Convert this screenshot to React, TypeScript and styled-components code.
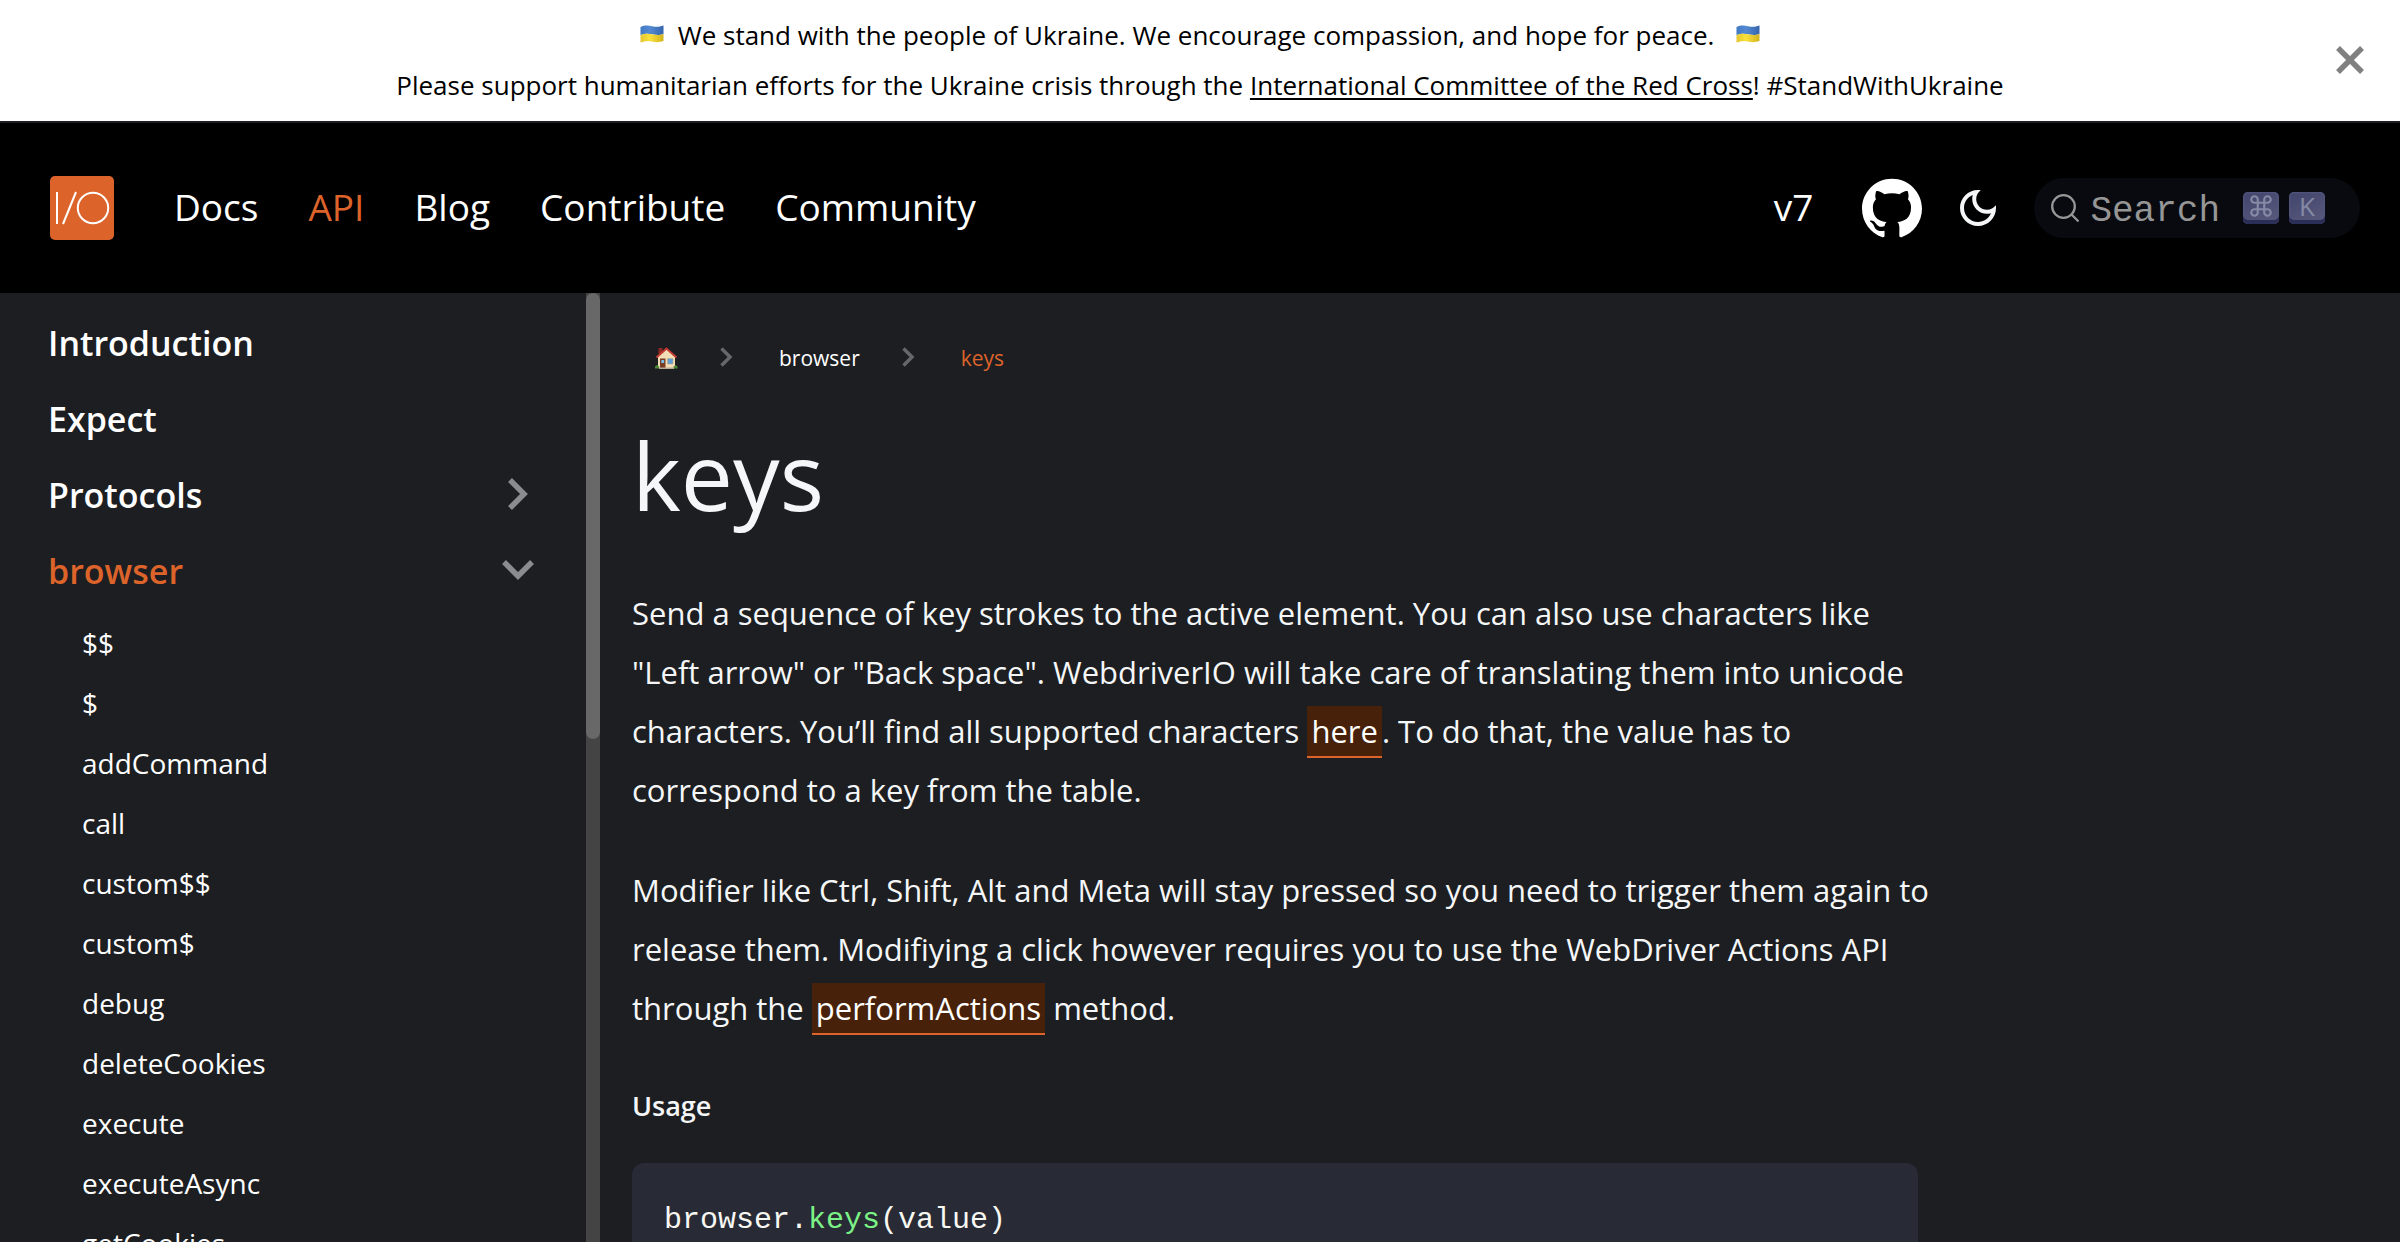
import React from "react";
import styled, { createGlobalStyle, css } from "styled-components";

const sans = `"Open Sans", "Noto Sans", sans-serif`;
const mono = `"Liberation Mono", monospace`;
const accent = "#dc632a";

const GlobalStyle = createGlobalStyle`
  *, *::before, *::after { box-sizing: border-box; }
  body {
    margin: 0;
    background: #1c1e21;
    color: #f5f6f7;
    font-family: ${sans};
  }
  a { color: inherit; text-decoration: none; }
  button { border: 0; padding: 0; margin: 0; background: none; color: inherit; cursor: pointer; }
  svg { display: block; flex: none; }
`;

const Page = styled.div`
  display: flex;
  flex-direction: column;
  height: 100vh;
  overflow: hidden;
`;

const Announcement = styled.div`
  display: flex;
  align-items: center;
  flex: none;
  padding: 10px 36px 11px;
  border-bottom: 2px solid #1c1e21;
  background: #fff;
  color: #000;
`;

const AnnouncementText = styled.div`
  flex: 1;
  padding-left: 28px;
  font-size: 26px;
  line-height: 50px;
  text-align: center;
`;

const FlagLine = styled.div`
  display: flex;
  align-items: center;
  justify-content: center;
`;

const FlagSlot = styled.span<{ $side: "left" | "right" }>`
  padding-bottom: 2px;
  ${(p) => (p.$side === "left" ? "margin-right: 14px;" : "margin-left: 22px;")}
`;

const BannerLink = styled.a`
  text-decoration: underline;
  text-decoration-thickness: 2px;
  text-underline-offset: 3px;
`;

const CloseButton = styled.button`
  color: #808080;
`;

const Navbar = styled.nav`
  display: flex;
  align-items: center;
  flex: none;
  height: 170px;
  padding: 0 40px 0 50px;
  background: #000;
`;

const NavLinks = styled.div`
  display: flex;
  gap: 50px;
  margin-left: 60px;
`;

const NavLink = styled.a<{ $active?: boolean }>`
  padding-bottom: 3px;
  font-size: 37px;
  line-height: 50px;
  color: ${(p) => (p.$active ? accent : "#fff")};
`;

const NavTools = styled.div`
  display: flex;
  align-items: center;
  gap: 32px;
  margin-left: auto;
`;

const VersionSlot = styled.div`
  display: flex;
  margin-right: 17px;
`;

const SearchButton = styled.button`
  display: flex;
  align-items: center;
  height: 60px;
  padding: 0 35px 0 17px;
  border-radius: 30px;
  background: #090a0f;
  color: #969696;
`;

const SearchLabel = styled.span`
  padding: 8px 23px 0 11px;
  font-family: ${mono};
  font-size: 36px;
  line-height: 40px;
`;

const Keys = styled.span`
  display: flex;
  gap: 10px;
`;

const Key = styled.kbd`
  display: flex;
  align-items: center;
  justify-content: center;
  width: 36px;
  height: 32px;
  padding-bottom: 5px;
  border-radius: 5px;
  background: linear-gradient(155deg, #41446c, #5a5b7d);
  box-shadow: inset 0 -4px 0 #2b2f58, inset 0 0 2px 1px #54587f;
  color: #858aa5;
  font-family: ${sans};
  font-size: 26px;
  line-height: 26px;
`;

const Body = styled.div`
  display: flex;
  flex: 1;
  min-height: 0;
`;

const Sidebar = styled.aside`
  display: flex;
  flex: none;
  width: 600px;
  overflow: hidden;
`;

const Menu = styled.ul`
  flex: 1;
  margin: 0;
  padding: 12px 52px 0 48px;
  list-style: none;
`;

const MenuRow = styled.div`
  display: flex;
  align-items: center;
  justify-content: space-between;
  height: 76px;
`;

const MenuLink = styled.a<{ $active?: boolean }>`
  font-size: 34px;
  font-weight: 600;
  line-height: 46px;
  color: ${(p) => (p.$active ? accent : "#fff")};
`;

const ToggleButton = styled.button<{ $open?: boolean }>`
  padding-bottom: 3px;
  color: #8b8c8e;
  ${(p) =>
    p.$open &&
    css`
      svg {
        transform: rotate(90deg);
      }
    `}
`;

const SubMenu = styled.ul`
  margin: 0;
  padding: 4px 0 0 34px;
  list-style: none;
`;

const SubLink = styled.a`
  display: block;
  font-size: 28px;
  line-height: 60px;
  color: #fff;
`;

const ScrollTrack = styled.div`
  flex: none;
  width: 14px;
  background: #444;
`;

const ScrollThumb = styled.div`
  height: 47%;
  border-radius: 7px;
  background: #686868;
`;

const Main = styled.main`
  flex: 1;
  min-width: 0;
  padding: 45px 32px 0;
`;

const Article = styled.article`
  max-width: 1286px;
`;

const Breadcrumbs = styled.nav`
  display: flex;
  align-items: center;
  height: 40px;
  padding-left: 23px;
  font-size: 21px;
  line-height: 40px;
`;

const CrumbChevron = styled.span`
  margin: 0 46px 0 42px;
  padding-bottom: 2px;
  color: #66676a;
`;

const Crumb = styled.a<{ $active?: boolean }>`
  color: ${(p) => (p.$active ? accent : "#fff")};
`;

const Title = styled.h1`
  margin: 40px 0 52px;
  font-size: 93px;
  font-weight: 400;
  line-height: 114px;
`;

const Paragraph = styled.p`
  margin: 0 -16px 41px 0;
  font-size: 31px;
  line-height: 59px;
`;

const ProseLink = styled.a`
  padding: 4px 4px;
  border-bottom: 2px solid ${accent};
  background: #472109;
  color: #fff;
`;

const SectionTitle = styled.h5`
  margin: 50px 0 39px;
  font-size: 27px;
  font-weight: 600;
  line-height: 36px;
`;

const CodeBlock = styled.pre`
  margin: 0;
  padding: 32px;
  border-radius: 12px;
  background: #282a36;
  color: #f8f8f2;
  font-family: ${mono};
  font-size: 30px;
  line-height: 50px;
`;

const Code = styled.code`
  font-family: inherit;
`;

const FunctionName = styled.span`
  color: #7cf286;
`;

const Flag = () => (
  <svg width="24" height="18" viewBox="0 0 24 18" aria-hidden="true">
    <defs>
      <linearGradient id="flag-blue" x1="0" x2="1">
        <stop offset="0" stopColor="#3f78c4" />
        <stop offset="0.4" stopColor="#5489d2" />
        <stop offset="1" stopColor="#3465ae" />
      </linearGradient>
      <linearGradient id="flag-yellow" x1="0" x2="1">
        <stop offset="0" stopColor="#e2c531" />
        <stop offset="0.4" stopColor="#fbe03c" />
        <stop offset="1" stopColor="#d3b31f" />
      </linearGradient>
    </defs>
    <path d="M0.5 2C5 0 8 .3 12 1.2S19 2 23.5.5V9C19 10.500 16 10 12 9.300S5 8.500.5 10Z" fill="url(#flag-blue)" />
    <path d="M.5 10C5 8.500 8 8.600 12 9.300S19 10.500 23.500 9V16C19 17.500 16 17.300 12 16.600S5 16 .5 17.500Z" fill="url(#flag-yellow)" />
  </svg>
);

const CloseIcon = () => (
  <svg width="28" height="28" viewBox="0 0 28 28" stroke="currentColor" strokeWidth="5.500" aria-hidden="true">
    <path d="M2 2 26 26M26 2 2 26" />
  </svg>
);

const Logo = () => (
  <svg width="64" height="64" viewBox="0 0 64 64" fill="none" stroke="#fff" strokeWidth="2" role="img" aria-label="WebdriverIO">
    <rect width="64" height="64" rx="5" fill={accent} stroke="none" />
    <path d="M7 16V48M26 16 13 48" />
    <circle cx="43" cy="32" r="15.200" />
  </svg>
);

const GitHubIcon = () => (
  <svg width="60" height="60" viewBox="0 0 24 24" fill="#fff" aria-hidden="true">
    <path d="M12 .297c-6.63 0-12 5.373-12 12 0 5.303 3.438 9.8 8.205 11.385.6.113.82-.258.82-.577 0-.285-.01-1.04-.015-2.04-3.338.724-4.042-1.61-4.042-1.61C4.422 18.07 3.633 17.7 3.633 17.7c-1.087-.744.084-.729.084-.729 1.205.084 1.838 1.236 1.838 1.236 1.07 1.835 2.809 1.305 3.495.998.108-.776.417-1.305.76-1.605-2.665-.3-5.466-1.332-5.466-5.93 0-1.31.465-2.38 1.235-3.22-.135-.303-.54-1.523.105-3.176 0 0 1.005-.322 3.3 1.23.96-.267 1.98-.399 3-.405 1.02.006 2.04.138 3 .405 2.28-1.552 3.285-1.23 3.285-1.23.645 1.653.24 2.873.12 3.176.765.84 1.23 1.91 1.23 3.22 0 4.61-2.805 5.625-5.475 5.92.42.36.81 1.096.81 2.22 0 1.606-.015 2.896-.015 3.286 0 .315.21.69.825.57C20.565 22.092 24 17.592 24 12.297c0-6.627-5.373-12-12-12" />
  </svg>
);

const MoonIcon = () => (
  <svg width="48" height="48" viewBox="0 0 24 24" fill="#f5f6f7" aria-hidden="true">
    <path d="M9.37,5.51C9.19,6.15,9.1,6.82,9.1,7.5c0,4.08,3.32,7.4,7.4,7.4c0.68,0,1.35-0.09,1.99-0.27C17.45,17.19,14.93,19,12,19c-3.86,0-7-3.14-7-7C5,9.07,6.81,6.55,9.37,5.51z M12,3c-4.97,0-9,4.03-9,9s4.03,9,9,9s9-4.03,9-9c0-0.46-0.04-0.92-0.1-1.36c-0.98,1.37-2.58,2.26-4.4,2.26c-2.98,0-5.4-2.42-5.4-5.4c0-1.81,0.89-3.42,2.26-4.4C12.92,3.04,12.46,3,12,3L12,3z" />
  </svg>
);

const SearchIcon = () => (
  <svg width="28" height="28" viewBox="0 0 28 28" fill="none" stroke="currentColor" strokeWidth="2.300" strokeLinecap="round" aria-hidden="true">
    <circle cx="12.500" cy="12.500" r="11.300" />
    <path d="M20.500 20.500 26.800 26.800" />
  </svg>
);

const CommandIcon = () => (
  <svg width="26" height="26" viewBox="0 0 24 24" fill="none" stroke="currentColor" strokeWidth="2" aria-hidden="true">
    <path d="M15 6v12a3 3 0 1 0 3-3H6a3 3 0 1 0 3 3V6a3 3 0 1 0-3 3h12a3 3 0 1 0-3-3" />
  </svg>
);

const MenuChevron = () => (
  <svg width="32" height="32" viewBox="0 0 32 32" fill="none" stroke="currentColor" strokeWidth="5.500" aria-hidden="true">
    <path d="M8 2 22 16 8 30" />
  </svg>
);

const SmallChevron = () => (
  <svg width="13" height="20" viewBox="0 0 13 20" fill="none" stroke="currentColor" strokeWidth="3.500" aria-hidden="true">
    <path d="M1.500 1.500 10 10 1.500 18.500" />
  </svg>
);

const HouseIcon = () => (
  <svg width="23" height="22" viewBox="0 0 23 22" role="img" aria-label="Home page">
    <path d="M3.500 1h4v6h-4z" fill="#8d2a24" />
    <path d="M3 9.500 11.500 2 20 9.500V21H3z" fill="#f4deb5" />
    <path d="M1.500 10.500 11.500 1.500 21.500 10.500" fill="none" stroke="#c33a32" strokeWidth="2" />
    <path d="M5 11.500h5.500V21H5z" fill="#7b3e24" />
    <path d="M6.300 13h2.800v3H6.300z" fill="#78bfe8" />
    <path d="M12.500 11.500h5.500v5.500h-5.500z" fill="#5d9fdb" stroke="#c4a77c" strokeWidth=".6" />
    <path d="M0 21.500v-2l2-1.500 2 1.500v2zM18.500 21.500v-2l2-1.500 2 1.500v2z" fill="#4f8a36" />
    <path d="M4 20.500h15v1.500H4z" fill="#b7ab94" />
  </svg>
);

const navItems = ["Docs", "API", "Blog", "Contribute", "Community"];
const commands = [
  "$$",
  "$",
  "addCommand",
  "call",
  "custom$$",
  "custom$",
  "debug",
  "deleteCookies",
  "execute",
  "executeAsync",
  "getCookies",
];

export default function App() {
  return (
    <Page>
      <GlobalStyle />
      <Announcement role="banner">
        <AnnouncementText>
          <FlagLine>
            <FlagSlot $side="left"><Flag /></FlagSlot>
            We stand with the people of Ukraine. We encourage compassion, and hope for peace.
            <FlagSlot $side="right"><Flag /></FlagSlot>
          </FlagLine>
          <div>
            Please support humanitarian efforts for the Ukraine crisis through the{" "}
            <BannerLink href="#icrc">International Committee of the Red Cross</BannerLink>! #StandWithUkraine
          </div>
        </AnnouncementText>
        <CloseButton type="button" aria-label="Close"><CloseIcon /></CloseButton>
      </Announcement>

      <Navbar aria-label="Main">
        <a href="#home"><Logo /></a>
        <NavLinks>
          {navItems.map((item) => (
            <NavLink key={item} href={`#${item.toLowerCase()}`} $active={item === "API"}>{item}</NavLink>
          ))}
        </NavLinks>
        <NavTools>
          <VersionSlot><NavLink href="#v7">v7</NavLink></VersionSlot>
          <a href="#github" aria-label="GitHub repository"><GitHubIcon /></a>
          <button type="button" aria-label="Switch between dark and light mode"><MoonIcon /></button>
          <SearchButton type="button">
            <SearchIcon />
            <SearchLabel>Search</SearchLabel>
            <Keys>
              <Key><CommandIcon /></Key>
              <Key>K</Key>
            </Keys>
          </SearchButton>
        </NavTools>
      </Navbar>

      <Body>
        <Sidebar>
          <Menu>
            <li><MenuRow><MenuLink href="#introduction">Introduction</MenuLink></MenuRow></li>
            <li><MenuRow><MenuLink href="#expect">Expect</MenuLink></MenuRow></li>
            <li>
              <MenuRow>
                <MenuLink href="#protocols">Protocols</MenuLink>
                <ToggleButton type="button" aria-label="Expand Protocols" aria-expanded={false}><MenuChevron /></ToggleButton>
              </MenuRow>
            </li>
            <li>
              <MenuRow>
                <MenuLink href="#browser" $active>browser</MenuLink>
                <ToggleButton type="button" aria-label="Collapse browser" aria-expanded $open><MenuChevron /></ToggleButton>
              </MenuRow>
              <SubMenu>
                {commands.map((name) => (
                  <li key={name}><SubLink href={`#${name}`}>{name}</SubLink></li>
                ))}
              </SubMenu>
            </li>
          </Menu>
          <ScrollTrack><ScrollThumb /></ScrollTrack>
        </Sidebar>

        <Main>
          <Article>
            <Breadcrumbs aria-label="Breadcrumbs">
              <a href="#home"><HouseIcon /></a>
              <CrumbChevron><SmallChevron /></CrumbChevron>
              <Crumb href="#browser">browser</Crumb>
              <CrumbChevron><SmallChevron /></CrumbChevron>
              <Crumb href="#keys" $active aria-current="page">keys</Crumb>
            </Breadcrumbs>
            <Title>keys</Title>
            <Paragraph>
              Send a sequence of key strokes to the active element. You can also use characters like "Left arrow" or
              "Back space". WebdriverIO will take care of translating them into unicode characters. You’ll find all
              supported characters <ProseLink href="#here">here</ProseLink>. To do that, the value has to correspond to
              a key from the table.
            </Paragraph>
            <Paragraph>
              Modifier like Ctrl, Shift, Alt and Meta will stay pressed so you need to trigger them again to release
              them. Modifiying a click however requires you to use the WebDriver Actions API through the{" "}
              <ProseLink href="#performactions">performActions</ProseLink> method.
            </Paragraph>
            <SectionTitle>Usage</SectionTitle>
            <CodeBlock><Code>browser.<FunctionName>keys</FunctionName>(value)</Code></CodeBlock>
          </Article>
        </Main>
      </Body>
    </Page>
  );
}
